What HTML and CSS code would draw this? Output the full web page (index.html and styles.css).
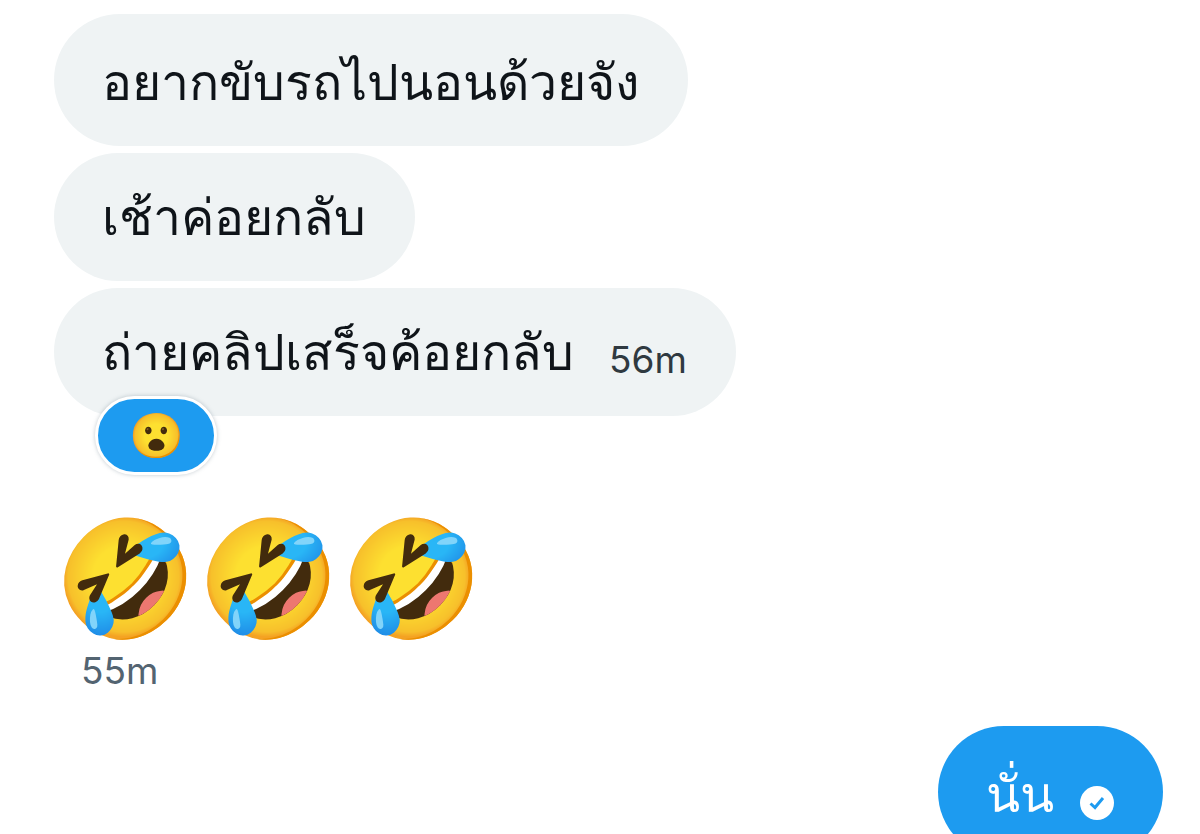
FILE: index.html
```html
<!DOCTYPE html>
<html lang="th">
<head>
    <meta charset="UTF-8">
    <meta name="viewport" content="width=device-width, initial-scale=1.0">
    <title>Messages</title>
    <link rel="stylesheet" href="styles.css">
</head>
<body>
    <main class="chat">
        <div class="bubble bubble-first">
            <span class="text">อยากขับรถไปนอนด้วยจัง</span>
        </div>
        <div class="bubble">
            <span class="text">เช้าค่อยกลับ</span>
        </div>
        <div class="bubble">
            <span class="text">ถ่ายคลิปเสร็จค้อยกลับ</span>
            <time class="time">56m</time>
            <button class="reaction" type="button" aria-label="Reaction">😮</button>
        </div>

        <div class="emoji-message">
            <p class="big-emoji">🤣🤣🤣</p>
            <time class="time">55m</time>
        </div>

        <div class="bubble bubble-first sent">
            <span class="text">นั่น</span>
            <svg class="check" viewBox="0 0 34 34" role="img" aria-label="Sent">
                <circle cx="17" cy="17" r="17" fill="#fff"/>
                <path d="M10.5 17.5l4.5 4 8-9.5" fill="none" stroke="#1d9bf0" stroke-width="3"/>
            </svg>
        </div>
    </main>
</body>
</html>
```
FILE: styles.css
```css
* {
    box-sizing: border-box;
}

body {
    margin: 0;
    background: #fff;
    color: #0f1419;
    font-family: Inter, Roboto, sans-serif;
    overflow: hidden;
    height: 100vh;
}

.chat {
    display: flex;
    flex-direction: column;
    align-items: flex-start;
    gap: 7px;
    padding: 14px 37px 0 54px;
}

.bubble {
    position: relative;
    display: flex;
    align-items: flex-end;
    gap: 35px;
    padding: 28px 49px 28px 48px;
    border-radius: 66px;
    background: #eff3f4;
}

.bubble-first {
    padding-top: 32px;
}

.text {
    font-size: 50px;
    line-height: 72px;
}

.time {
    font-size: 37px;
    line-height: 56px;
    color: #2f3940;
}

/* reaction pill hangs over the bottom edge of its bubble */
.reaction {
    position: absolute;
    left: 41px;
    top: 108px;
    width: 122px;
    height: 79px;
    padding: 0;
    border: 3px solid #fff;
    border-radius: 40px;
    background: #1d9bf0;
    box-shadow: 0 0 4px rgba(101, 119, 134, 0.4);
    font-family: inherit;
    font-size: 44px;
    line-height: 73px;
    cursor: pointer;
}

.emoji-message {
    display: flex;
    flex-direction: column;
    margin-top: 90px;
}

.big-emoji {
    margin: 0;
    font-size: 115px;
    line-height: 130px;
}

.emoji-message .time {
    padding-left: 27px;
    color: #536471;
}

.sent {
    align-self: flex-end;
    gap: 26px;
    margin-top: 20px;
    background: #1d9bf0;
    color: #fff;
}

.check {
    width: 34px;
    height: 34px;
    margin-bottom: 10px;
}
```
